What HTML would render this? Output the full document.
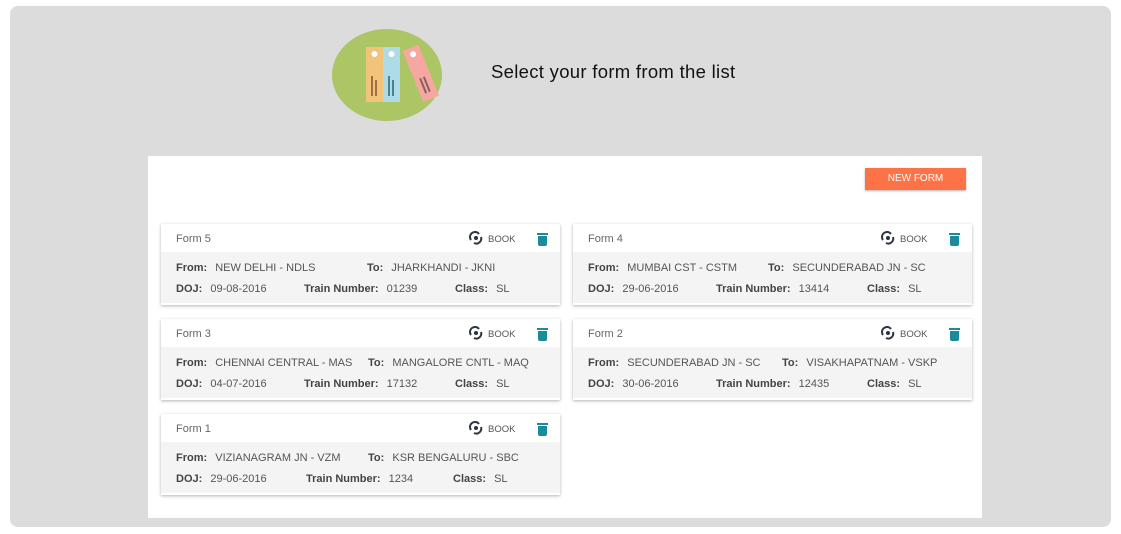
<!DOCTYPE html><html><head><style>
body{margin:0;width:1121px;height:534px;background:#fff;font-family:"Liberation Sans",Arial,sans-serif;position:relative;overflow:hidden}
.panel{position:absolute;left:10px;top:6px;width:1101px;height:521px;background:#dcdcdc;border-radius:8px}
.title{position:absolute;left:491px;top:61px;font-size:18.5px;color:#111;letter-spacing:.3px}
.box{position:absolute;left:148px;top:156px;width:834px;height:362px;background:#fff}
.btn{position:absolute;left:865px;top:168px;width:101px;height:22px;background:#fe7247;color:#fff;font-size:10px;text-align:center;line-height:22px;box-shadow:0 1px 2px rgba(0,0,0,.3)}
.card{position:absolute;width:399px;height:81px;background:#fff;box-shadow:0 1px 3px rgba(0,0,0,.3)}
.hd{height:28px;position:relative;font-size:11px;color:#666}
.hd .n{position:absolute;left:15px;top:9px}
.hd .b{position:absolute;left:327px;top:10px;font-size:9.5px;color:#555}
.hd .b svg{position:absolute;left:-20px;top:-3px}
.hd .t{position:absolute;left:377px;top:12px;width:9px;height:10px;background:#1b8a9b;border-radius:0 0 2px 2px}
.hd .t:before{content:"";position:absolute;left:-1px;top:-3px;width:11px;height:2px;background:#1b8a9b}
.bd{position:absolute;left:0;top:28px;width:399px;height:51px;background:#f4f4f4;font-size:11px;color:#555}
.bd span{position:absolute;white-space:nowrap}
.bd b{color:#444;margin-right:5px}
</style></head><body>
<div class="panel"></div>
<svg style="position:absolute;left:332px;top:28px" width="110" height="94">
<ellipse cx="55" cy="47" rx="55" ry="46" fill="#acc565"/>
<rect x="34" y="19" width="17" height="55" fill="#f0c47a"/>
<rect x="51" y="19" width="17" height="55" fill="#aedbe8"/>
<g transform="rotate(-22 78 20)"><rect x="70" y="20" width="17" height="55" fill="#f5a7a0"/><circle cx="78.5" cy="27" r="3" fill="#fff"/><rect x="75" y="52" width="2" height="16" fill="#8a6060"/><rect x="79" y="52" width="2" height="16" fill="#8a6060"/></g>
<circle cx="42.5" cy="26" r="3" fill="#fff"/><circle cx="59.5" cy="26" r="3" fill="#fff"/>
<rect x="39" y="48" width="2" height="20" fill="#a07040"/><rect x="43" y="52" width="2" height="16" fill="#a07040"/>
<rect x="56" y="48" width="2" height="20" fill="#4a8090"/><rect x="60" y="52" width="2" height="16" fill="#4a8090"/>
</svg>
<div class="title">Select your form from the list</div>
<div class="box"></div>
<div class="btn">NEW FORM</div>
<div class="card" style="left:161px;top:224px"><div class="hd"><span class="n">Form 5</span><span class="b"><svg width="16" height="14"><path d="M3 9a5 5 0 0 1 8-6M13 6a5 5 0 0 1-7 6" stroke="#334" stroke-width="2" fill="none"/><circle cx="8" cy="7" r="2" fill="#234"/></svg>BOOK</span><span class="t"></span></div><div class="bd"><span style="left:15px;top:10px"><b>From:</b> NEW DELHI - NDLS</span><span style="left:206px;top:10px"><b>To:</b> JHARKHANDI - JKNI</span><span style="left:15px;top:31px"><b>DOJ:</b> 09-08-2016</span><span style="left:143px;top:31px"><b>Train Number:</b> 01239</span><span style="left:294px;top:31px"><b>Class:</b> SL</span></div></div>
<div class="card" style="left:573px;top:224px"><div class="hd"><span class="n">Form 4</span><span class="b"><svg width="16" height="14"><path d="M3 9a5 5 0 0 1 8-6M13 6a5 5 0 0 1-7 6" stroke="#334" stroke-width="2" fill="none"/><circle cx="8" cy="7" r="2" fill="#234"/></svg>BOOK</span><span class="t"></span></div><div class="bd"><span style="left:15px;top:10px"><b>From:</b> MUMBAI CST - CSTM</span><span style="left:195px;top:10px"><b>To:</b> SECUNDERABAD JN - SC</span><span style="left:15px;top:31px"><b>DOJ:</b> 29-06-2016</span><span style="left:143px;top:31px"><b>Train Number:</b> 13414</span><span style="left:294px;top:31px"><b>Class:</b> SL</span></div></div>
<div class="card" style="left:161px;top:319px"><div class="hd"><span class="n">Form 3</span><span class="b"><svg width="16" height="14"><path d="M3 9a5 5 0 0 1 8-6M13 6a5 5 0 0 1-7 6" stroke="#334" stroke-width="2" fill="none"/><circle cx="8" cy="7" r="2" fill="#234"/></svg>BOOK</span><span class="t"></span></div><div class="bd"><span style="left:15px;top:10px"><b>From:</b> CHENNAI CENTRAL - MAS</span><span style="left:207px;top:10px"><b>To:</b> MANGALORE CNTL - MAQ</span><span style="left:15px;top:31px"><b>DOJ:</b> 04-07-2016</span><span style="left:143px;top:31px"><b>Train Number:</b> 17132</span><span style="left:294px;top:31px"><b>Class:</b> SL</span></div></div>
<div class="card" style="left:573px;top:319px"><div class="hd"><span class="n">Form 2</span><span class="b"><svg width="16" height="14"><path d="M3 9a5 5 0 0 1 8-6M13 6a5 5 0 0 1-7 6" stroke="#334" stroke-width="2" fill="none"/><circle cx="8" cy="7" r="2" fill="#234"/></svg>BOOK</span><span class="t"></span></div><div class="bd"><span style="left:15px;top:10px"><b>From:</b> SECUNDERABAD JN - SC</span><span style="left:209px;top:10px"><b>To:</b> VISAKHAPATNAM - VSKP</span><span style="left:15px;top:31px"><b>DOJ:</b> 30-06-2016</span><span style="left:143px;top:31px"><b>Train Number:</b> 12435</span><span style="left:294px;top:31px"><b>Class:</b> SL</span></div></div>
<div class="card" style="left:161px;top:414px"><div class="hd"><span class="n">Form 1</span><span class="b"><svg width="16" height="14"><path d="M3 9a5 5 0 0 1 8-6M13 6a5 5 0 0 1-7 6" stroke="#334" stroke-width="2" fill="none"/><circle cx="8" cy="7" r="2" fill="#234"/></svg>BOOK</span><span class="t"></span></div><div class="bd"><span style="left:15px;top:10px"><b>From:</b> VIZIANAGRAM JN - VZM</span><span style="left:207px;top:10px"><b>To:</b> KSR BENGALURU - SBC</span><span style="left:15px;top:31px"><b>DOJ:</b> 29-06-2016</span><span style="left:145px;top:31px"><b>Train Number:</b> 1234</span><span style="left:292px;top:31px"><b>Class:</b> SL</span></div></div>
</body></html>
